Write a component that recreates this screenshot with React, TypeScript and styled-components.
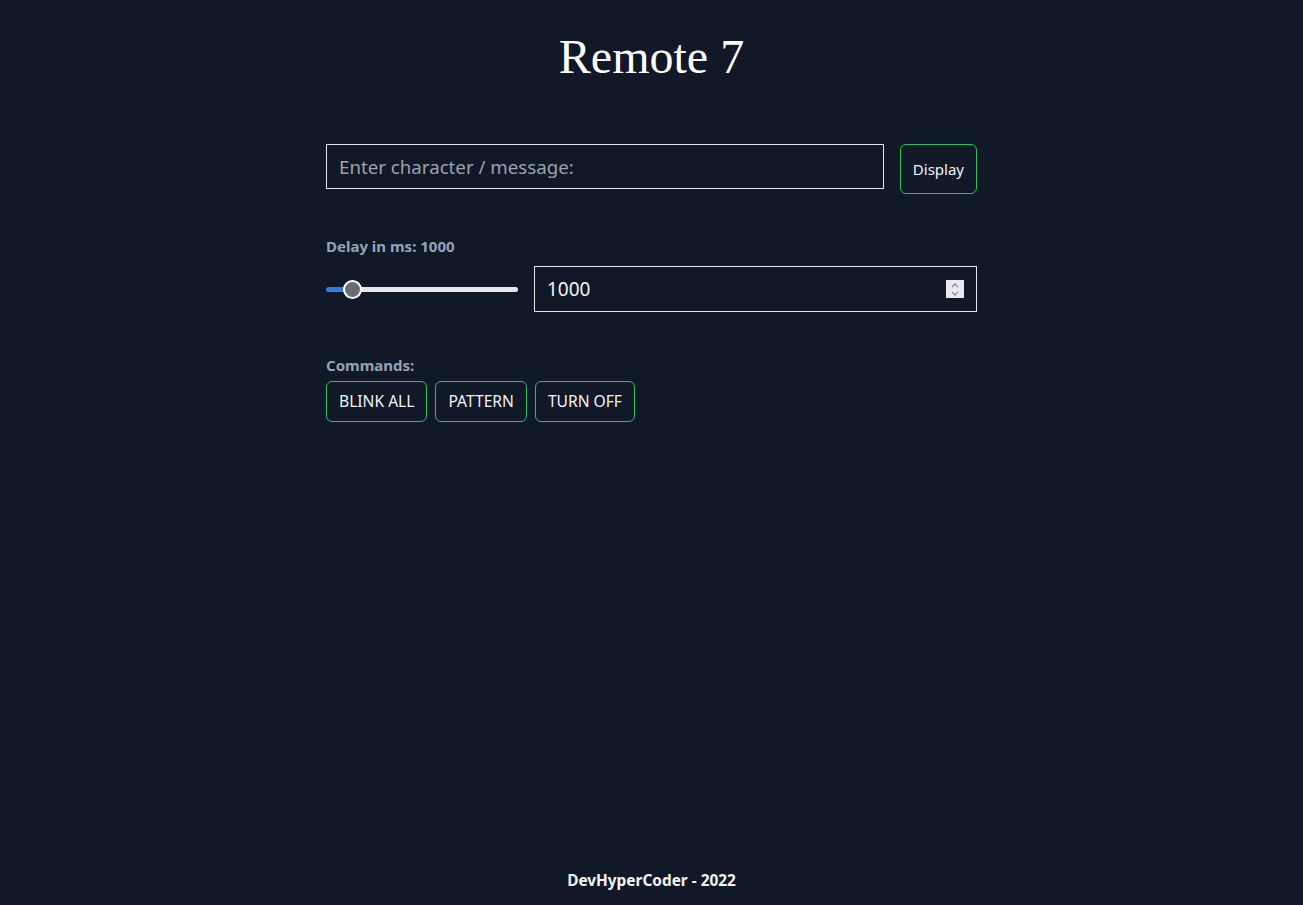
import React, { useState } from "react";
import styled, { createGlobalStyle } from "styled-components";

const Global = createGlobalStyle`
  html, body { margin: 0; padding: 0; background: #111827; }
  body { font-family: "Noto Sans", "Open Sans", sans-serif; color: #f3f4f6; }
  * { box-sizing: border-box; }
`;

const Page = styled.div`
  min-height: 100vh;
  display: flex;
  flex-direction: column;
  align-items: center;
  background: #111827;
`;

const Title = styled.h1`
  margin: 29px 0 0;
  font-family: "Liberation Serif", "Times New Roman", serif;
  font-weight: 400;
  font-size: 48px;
  line-height: 55px;
  color: #ffffff;
`;

const Main = styled.main`
  width: 651px;
  margin-top: 60px;
  display: flex;
  flex-direction: column;
`;

const Row = styled.div<{ $align?: string }>`
  display: flex;
  align-items: ${(p) => p.$align || "flex-start"};
  gap: 16px;
`;

const TextInput = styled.input`
  flex: 1;
  height: 45px;
  padding: 0 12px;
  background: transparent;
  border: 1px solid #e5e7eb;
  border-radius: 0;
  color: #f3f4f6;
  font-family: inherit;
  font-size: 18.7px;
  outline: none;
  &::placeholder { color: #9ca3af; }
`;

const GreenButton = styled.button<{ $tall?: boolean }>`
  padding: ${(p) => (p.$tall ? "12px 12px" : "8px 12px")};
  background: transparent;
  border: 1px solid #22c55e;
  border-radius: 6px;
  color: #f3f4f6;
  font-family: inherit;
  font-size: ${(p) => (p.$tall ? "15px" : "15.6px")};
  line-height: ${(p) => (p.$tall ? "24px" : "23px")};
  cursor: pointer;
`;

const Label = styled.label<{ $top: number; $bottom: number }>`
  display: block;
  margin-top: ${(p) => p.$top}px;
  margin-bottom: ${(p) => p.$bottom}px;
  font-size: 15px;
  line-height: 20px;
  font-weight: 700;
  color: #94a3b8;
`;

const Range = styled.input`
  -webkit-appearance: none;
  appearance: none;
  width: 192px;
  height: 5px;
  margin: 0;
  border-radius: 3px;
  outline: none;
  &::-webkit-slider-thumb {
    -webkit-appearance: none;
    width: 19px;
    height: 19px;
    border-radius: 50%;
    background: #6b6b78;
    border: 2px solid #ffffff;
    cursor: pointer;
  }
`;

const NumberWrap = styled.div`
  position: relative;
  flex: 1;
  display: flex;
`;

const NumberInput = styled.input`
  flex: 1;
  height: 46px;
  padding: 0 40px 0 12px;
  background: transparent;
  border: 1px solid #e5e7eb;
  border-radius: 0;
  color: #f3f4f6;
  font-family: inherit;
  font-size: 19px;
  outline: none;
  -moz-appearance: textfield;
  &::-webkit-inner-spin-button,
  &::-webkit-outer-spin-button {
    -webkit-appearance: none;
    margin: 0;
  }
`;

const Spinner = styled.div`
  position: absolute;
  right: 13px;
  top: 14px;
  width: 18px;
  height: 18px;
  background: #e9e9ed;
  display: flex;
  flex-direction: column;
  align-items: center;
  justify-content: center;
  gap: 3px;
  pointer-events: none;
`;

const Commands = styled.div`
  display: flex;
  gap: 8px;
`;

const Footer = styled.footer`
  margin-top: auto;
  padding-bottom: 12px;
  font-size: 15.4px;
  line-height: 24px;
  font-weight: 700;
  color: #f3f4f6;
`;

const Chevron = ({ up }: { up?: boolean }) => (
  <svg width="8" height="5" viewBox="0 0 8 5">
    <path
      d={up ? "M1 4 L4 1 L7 4" : "M1 1 L4 4 L7 1"}
      fill="none"
      stroke="#8d8d98"
      strokeWidth="1.3"
    />
  </svg>
);

export default function App() {
  const [delay, setDelay] = useState(1000);
  const pct = (delay / 10000) * 100;
  return (
    <Page>
      <Global />
      <Title>Remote 7</Title>
      <Main>
        <Row>
          <TextInput placeholder="Enter character / message:" />
          <GreenButton $tall>Display</GreenButton>
        </Row>
        <Label $top={42} $bottom={10}>Delay in ms: {delay}</Label>
        <Row $align="center">
          <Range
            type="range"
            min={0}
            max={10000}
            value={delay}
            onChange={(e) => setDelay(Number(e.target.value))}
            style={{
              background: `linear-gradient(to right, #2f7de1 0%, #2f7de1 ${pct}%, #e5e5ea ${pct}%, #e5e5ea 100%)`,
            }}
          />
          <NumberWrap>
            <NumberInput
              type="number"
              value={delay}
              onChange={(e) => setDelay(Number(e.target.value))}
            />
            <Spinner>
              <Chevron up />
              <Chevron />
            </Spinner>
          </NumberWrap>
        </Row>
        <Label $top={43} $bottom={6}>Commands:</Label>
        <Commands>
          <GreenButton>BLINK ALL</GreenButton>
          <GreenButton>PATTERN</GreenButton>
          <GreenButton>TURN OFF</GreenButton>
        </Commands>
      </Main>
      <Footer>DevHyperCoder - 2022</Footer>
    </Page>
  );
}
